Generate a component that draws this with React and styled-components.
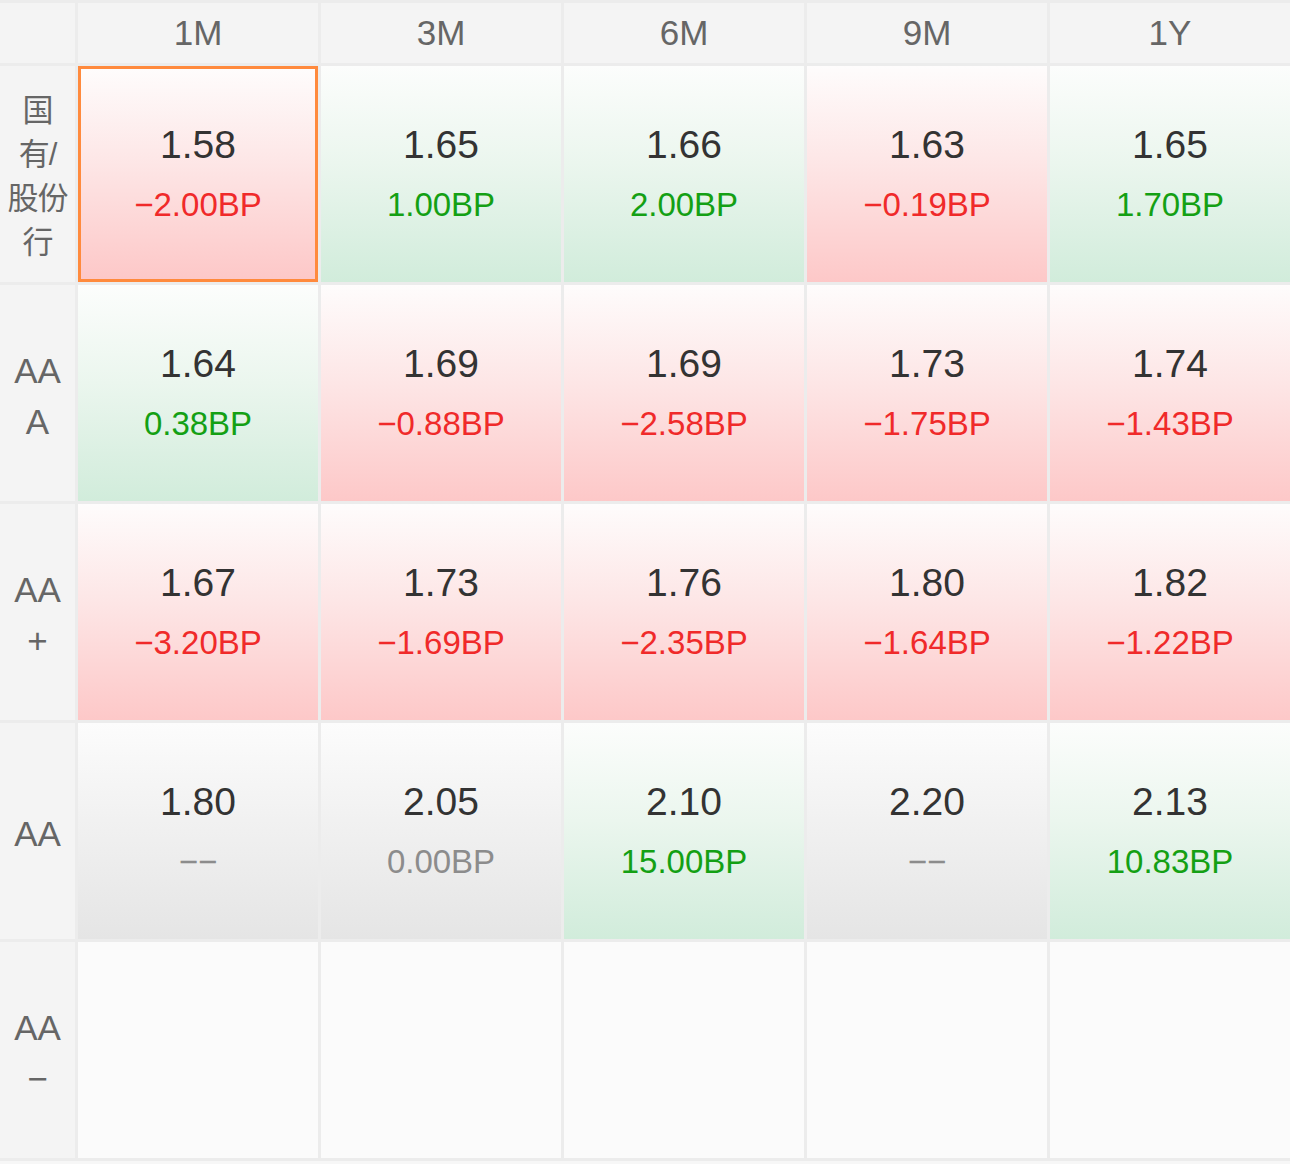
import styled, { createGlobalStyle, css } from "styled-components";

const GlobalStyle = createGlobalStyle`
    html, body {
        margin: 0;
        padding: 0;
        background-color: #f7f7f7;
    }
    body {
        font-family: "Liberation Sans", "Noto Sans CJK SC", sans-serif;
    }
`

const columns = ['1M', '3M', '6M', '9M', '1Y'];

const rows = [
    {label: ['国', '有/', '股份', '行'], cjk: true, cells: [
        {value: '1.58', bp: -2.00, selected: true},
        {value: '1.65', bp: 1.00},
        {value: '1.66', bp: 2.00},
        {value: '1.63', bp: -0.19},
        {value: '1.65', bp: 1.70},
    ]},
    {label: ['AA', 'A'], cells: [
        {value: '1.64', bp: 0.38},
        {value: '1.69', bp: -0.88},
        {value: '1.69', bp: -2.58},
        {value: '1.73', bp: -1.75},
        {value: '1.74', bp: -1.43},
    ]},
    {label: ['AA', '+'], cells: [
        {value: '1.67', bp: -3.20},
        {value: '1.73', bp: -1.69},
        {value: '1.76', bp: -2.35},
        {value: '1.80', bp: -1.64},
        {value: '1.82', bp: -1.22},
    ]},
    {label: ['AA'], cells: [
        {value: '1.80', bp: null},
        {value: '2.05', bp: 0},
        {value: '2.10', bp: 15.00},
        {value: '2.20', bp: null},
        {value: '2.13', bp: 10.83},
    ]},
    {label: ['AA', '−'], cells: [null, null, null, null, null]},
];

const getTone = (bp) => {
    if (bp === null || bp === 0) return 'flat';
    return bp > 0 ? 'up' : 'down';
}

const getBpText = (bp) => {
    if (bp === null) return '−−';
    const text = Math.abs(bp).toFixed(2) + 'BP';
    return bp < 0 ? '−' + text : text;
}

const backgrounds = {
    down: 'linear-gradient(180deg, #fefcfc 0%, #fde6e6 45%, #fdc8c8 100%)',
    up: 'linear-gradient(180deg, #fcfdfc 0%, #ebf6ee 45%, #d1ecdb 100%)',
    flat: 'linear-gradient(180deg, #fcfcfc 0%, #f1f1f1 45%, #e5e5e5 100%)',
    empty: '#fbfbfb',
}

const textColors = {
    down: '#f02a2a',
    up: '#14a014',
    flat: '#8c8c8c',
}

const Board = styled.div`
    display: grid;
    grid-template-columns: 75px repeat(5, 240px);
    grid-template-rows: 60px repeat(5, 216px);
    gap: 3px;
    padding: 3px 0;
    background-color: #ececec;
    width: 1290px;
`

const Corner = styled.div`
    background-color: #f4f4f4;
`

const HeadCell = styled.div`
    display: flex;
    align-items: center;
    justify-content: center;
    background-color: #f4f4f4;
    color: #666;
    font-size: 35px;
`

const RowLabel = styled.div`
    display: flex;
    flex-direction: column;
    align-items: center;
    justify-content: center;
    padding-top: 5px;
    background-color: #f4f4f4;
    color: #666;
`

const LabelLine = styled.div`
    font-size: ${(props) => props.$cjk ? '31px' : '35px'};
    line-height: ${(props) => props.$cjk ? '44px' : '51px'};
    letter-spacing: ${(props) => props.$cjk ? '-1px' : '0'};
`

const QuoteCell = styled.div`
    box-sizing: border-box;
    display: flex;
    flex-direction: column;
    align-items: center;
    justify-content: center;
    gap: 17px;
    padding-bottom: 2px;
    background: ${(props) => backgrounds[props.$tone]};
    ${(props) => props.$selected && css`
        border: 3px solid #ff8a3d;
    `}
`

const Value = styled.div`
    font-size: 39px;
    line-height: 46px;
    font-weight: 500;
    color: #333;
`

const Change = styled.div`
    font-size: 33px;
    line-height: 40px;
    color: ${(props) => textColors[props.$tone]};
`

const Quote = ({cell}) => {
    if (!cell) return <QuoteCell $tone="empty" />;
    const tone = getTone(cell.bp);
    return (
        <QuoteCell $tone={tone} $selected={cell.selected}>
            <Value>{cell.value}</Value>
            <Change $tone={tone}>{getBpText(cell.bp)}</Change>
        </QuoteCell>
    );
}

const App = () => {
    return (
        <>
            <GlobalStyle />
            <Board>
                <Corner />
                {columns.map(c => <HeadCell key={c}>{c}</HeadCell>)}
                {rows.map((row, r) => [
                    <RowLabel key={'l' + r}>
                        {row.label.map((line, i) => <LabelLine key={i} $cjk={row.cjk}>{line}</LabelLine>)}
                    </RowLabel>,
                    ...row.cells.map((cell, i) => <Quote key={r + '-' + i} cell={cell} />),
                ])}
            </Board>
        </>
    );
}

export default App;
